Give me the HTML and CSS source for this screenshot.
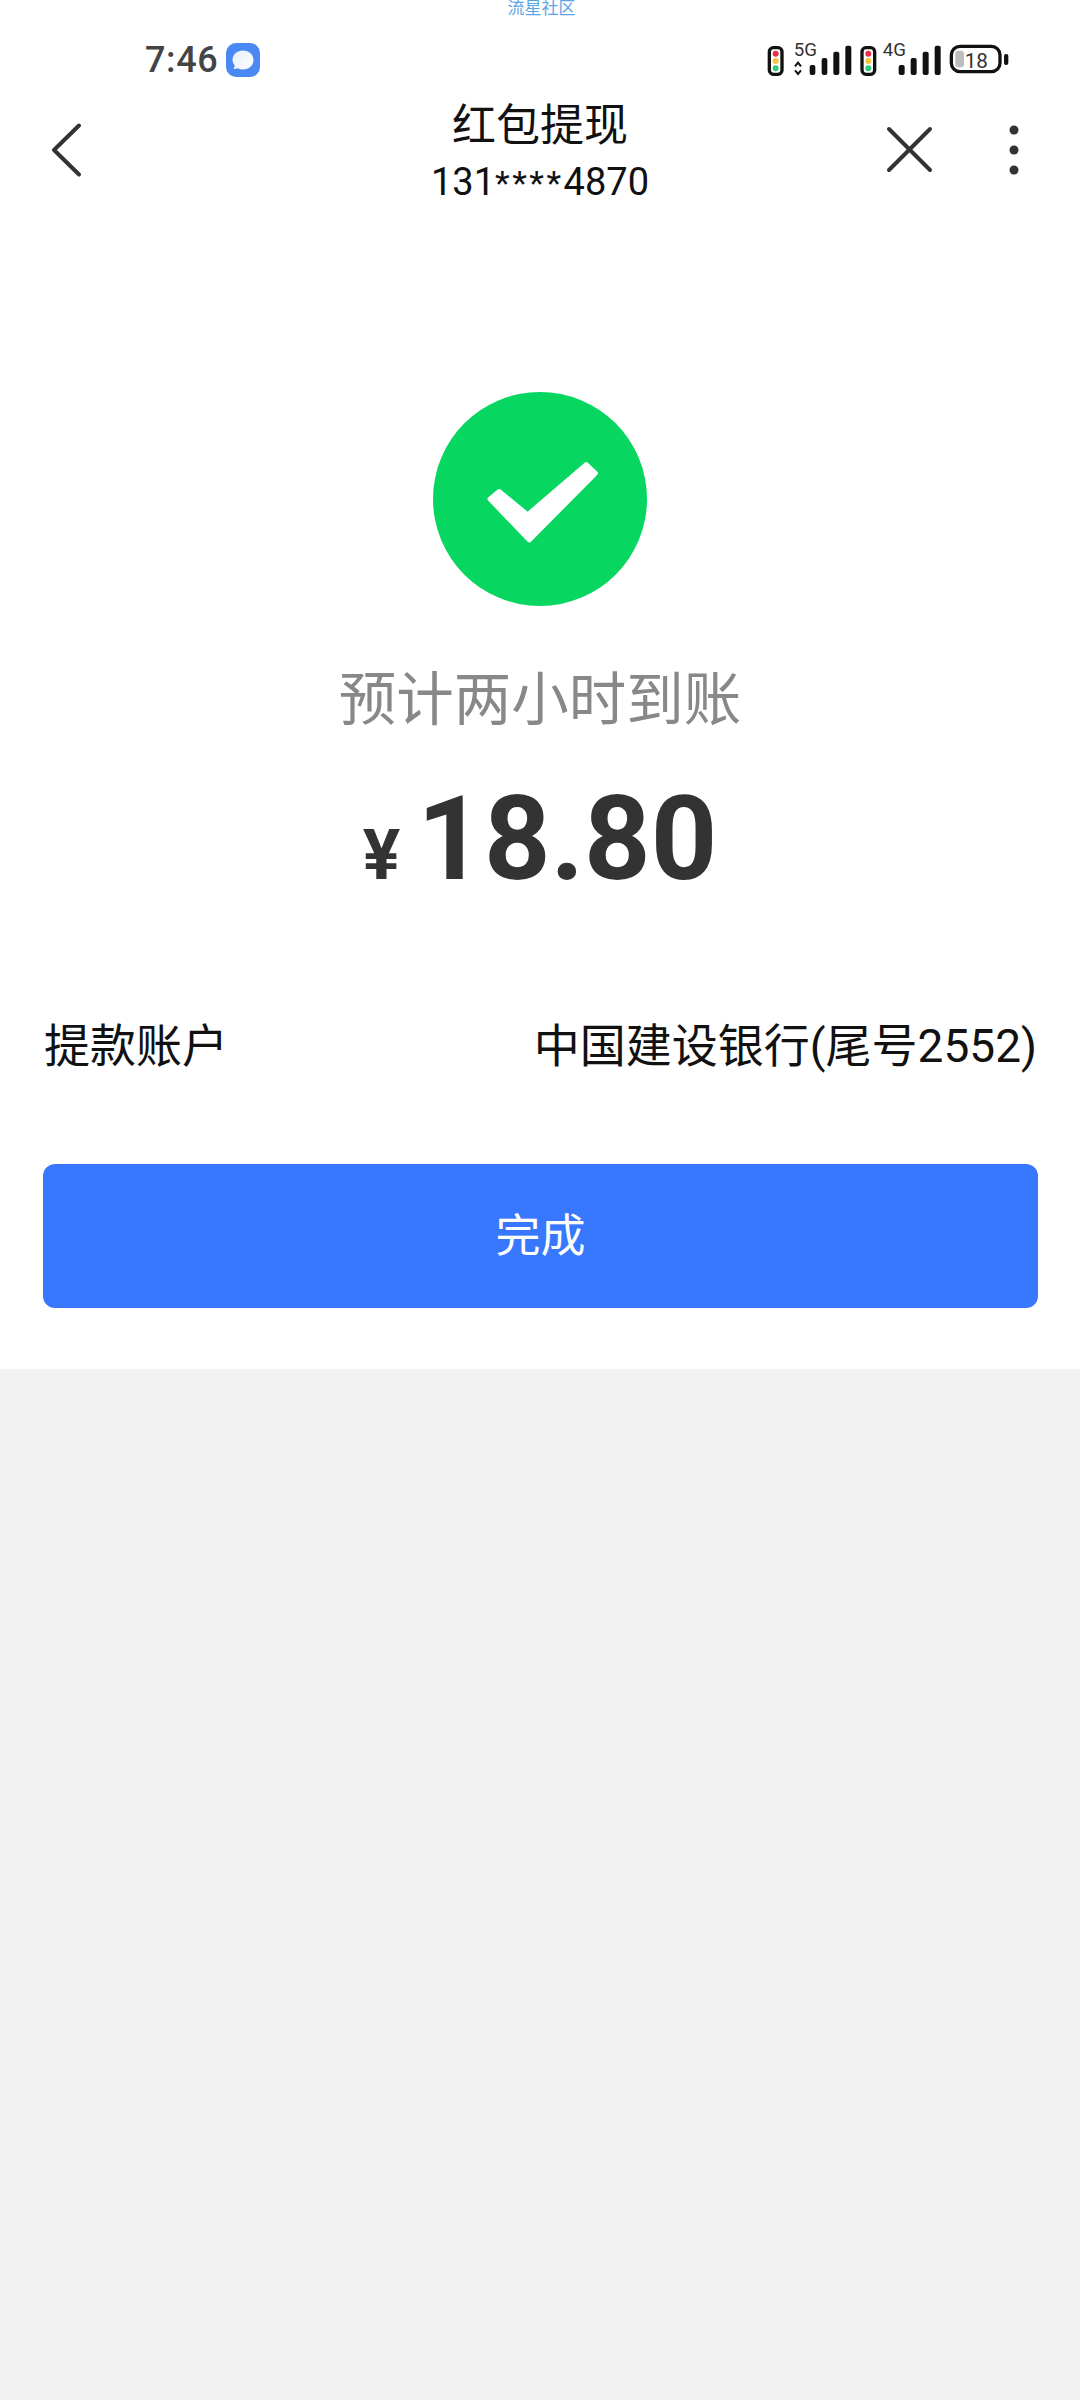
FILE: index.html
```html
<!DOCTYPE html>
<html lang="zh-CN">
<head>
<meta charset="utf-8">
<title>红包提现</title>
<link rel="stylesheet" href="styles.css">
</head>
<body>
<main class="sheet">
  <div class="watermark">流星社区</div>
  <div class="statusbar">
    <div class="status-left">
      <span class="clock">7:46</span>
      <svg class="msg-icon" viewBox="0 0 34 34" aria-hidden="true">
        <defs>
          <linearGradient id="bub" x1="0" y1="0" x2="1" y2="1">
            <stop offset="0" stop-color="#e4eefc"/><stop offset="1" stop-color="#ffffff"/>
          </linearGradient>
        </defs>
        <rect width="34" height="34" rx="10" fill="#4a89f3"/>
        <path d="M17 7.500c6 0 10.500 4 10.500 9.500s-4.500 9.500-10.500 9.500c-2 0-3.800-.4-5.300-1.200l-4.200 1 1.300-3.700C7.500 21 6.500 19 6.500 17c0-5.500 4.500-9.500 10.500-9.500z" fill="url(#bub)"/>
      </svg>
    </div>
    <svg class="status-right" viewBox="0 0 900 180" aria-hidden="true">
      <g class="sig">
        <rect x="88" y="83" width="38" height="80" rx="12" fill="#fff" stroke="#111" stroke-width="10"/>
        <circle cx="107" cy="101" r="9" fill="#e8304a"/><circle cx="107" cy="123" r="9" fill="#f7c23c"/><circle cx="107" cy="145" r="9" fill="#35c77c"/>
        <text x="161" y="107" class="net">5G</text>
        <path d="M165 139l9-11 9 11M165 151l9 11 9-11" fill="none" stroke="#111" stroke-width="6"/>
        <rect x="209" y="135" width="17" height="30" rx="6"/><rect x="245" y="114" width="17" height="51" rx="6"/><rect x="280" y="95" width="18" height="70" rx="6"/><rect x="316" y="77" width="18" height="88" rx="6"/>
        <rect x="366" y="83" width="38" height="80" rx="12" fill="#fff" stroke="#111" stroke-width="10"/>
        <circle cx="385" cy="101" r="9" fill="#e8304a"/><circle cx="385" cy="123" r="9" fill="#f7c23c"/><circle cx="385" cy="145" r="9" fill="#35c77c"/>
        <text x="428" y="107" class="net">4G</text>
        <rect x="476" y="135" width="18" height="30" rx="6"/><rect x="512" y="114" width="18" height="51" rx="6"/><rect x="548" y="95" width="18" height="70" rx="6"/><rect x="584" y="77" width="18" height="88" rx="6"/>
        <rect x="634" y="79" width="146" height="76" rx="26" fill="#fff" stroke="#111" stroke-width="10"/>
        <rect x="646" y="92" width="26" height="50" rx="9" fill="#bdbdbd"/>
        <text x="674" y="143" class="batt">18</text>
        <rect x="792" y="102" width="13" height="33" rx="6"/>
      </g>
    </svg>
  </div>
  <header class="navbar">
    <button class="icon-btn back" aria-label="返回">
      <svg viewBox="0 0 40 60" class="nav-svg back-svg"><path d="M32 5.500 7 30l25 24.500"/></svg>
    </button>
    <div class="titles">
      <div class="title">红包提现</div>
      <div class="subtitle">131<span class="mask">****</span>4870</div>
    </div>
    <div class="nav-actions">
      <svg viewBox="0 0 50 50" class="nav-svg close-svg"><path d="M4 4l41 41M45 4 4 45"/></svg>
      <svg viewBox="0 0 10 50" class="dots-svg"><circle cx="5" cy="5" r="4.500"/><circle cx="5" cy="25" r="4.500"/><circle cx="5" cy="45" r="4.500"/></svg>
    </div>
  </header>
  <section class="result">
    <svg class="check" viewBox="42 35 640 640" aria-hidden="true">
      <circle cx="362" cy="355" r="320" fill="#07d660"/>
      <path d="M212 355 240 332 325 402 500 252 528 278 330 478z" fill="#fff" stroke="#fff" stroke-width="14" stroke-linejoin="round"/>
    </svg>
    <div class="status-text">预计两小时到账</div>
    <div class="amount"><span class="yen">¥</span><span class="value">18.80</span></div>
  </section>
  <div class="info-row">
    <span>提款账户</span>
    <span>中国建设银行(尾号2552)</span>
  </div>
  <button class="done">完成</button>
</main>
</body>
</html>
```
FILE: styles.css
```css
* { box-sizing: border-box; }
html, body { margin: 0; padding: 0; }
body {
  width: 1080px;
  height: 2400px;
  background: #f2f2f2;
  font-family: Roboto, "Noto Sans CJK SC", sans-serif;
  overflow: hidden;
}
.sheet {
  background: #fff;
  height: 1369px;
  display: flex;
  flex-direction: column;
}
.watermark {
  height: 20px;
  padding-left: 3px;
  text-align: center;
  font-size: 17px;
  line-height: 16px;
  color: #58a6e8;
}
.statusbar {
  height: 60px;
  display: flex;
  justify-content: space-between;
  align-items: flex-start;
  padding: 0 40px 0 145px;
}
.status-left {
  display: flex;
  align-items: center;
  gap: 8px;
  height: 80px;
}
.clock {
  font-size: 36px;
  font-weight: 500;
  color: #444;
  letter-spacing: 0.6px;
  line-height: 40px;
}
.msg-icon { width: 34px; height: 34px; }
.status-right { width: 300px; height: 60px; display: block; }
.sig { fill: #111; }
.net { font: 400 56px Roboto, sans-serif; fill: #333; stroke: none; }
.batt { font: 400 62px Roboto, sans-serif; fill: #333; stroke: none; }
.navbar {
  display: grid;
  grid-template-columns: 1fr auto 1fr;
  align-items: start;
  height: 120px;
}
.icon-btn {
  border: 0;
  background: none;
  padding: 0;
  margin: 0;
  text-align: left;
}
.nav-svg { fill: none; stroke: #333; stroke-width: 4; stroke-linecap: round; stroke-linejoin: round; display: block; }
.back-svg { width: 40px; height: 60px; margin: 40px 0 0 47px; }
.titles { text-align: center; color: #111; }
.title { font-size: 44px; line-height: 60px; margin-top: 16px; }
.subtitle { font-size: 38px; line-height: 52px; }
.mask { font-size: 34px; letter-spacing: 2.5px; }
.nav-actions {
  display: flex;
  justify-content: flex-end;
  align-items: flex-start;
  gap: 74px;
  padding: 45px 61px 0 0;
}
.close-svg { width: 50px; height: 50px; }
.dots-svg { width: 10px; height: 50px; fill: #333; display: block; }
.result {
  display: flex;
  flex-direction: column;
  align-items: center;
}
.check { width: 214px; height: 214px; margin-top: 192px; display: block; }
.status-text {
  margin-top: 55px;
  font-size: 57.5px;
  line-height: 80px;
  color: #888;
}
.amount {
  margin-top: 30px;
  display: flex;
  align-items: baseline;
  gap: 17px;
  color: #333;
  font-weight: 700;
  line-height: 136px;
}
.yen { font-size: 70px; }
.value { font-size: 116px; letter-spacing: 0; }
.info-row {
  display: flex;
  justify-content: space-between;
  align-items: center;
  margin-top: 84px;
  padding: 0 43px 0 44px;
  height: 70px;
  font-size: 46px;
  color: #111;
}
.done {
  margin: 87px 42px 0 43px;
  height: 144px;
  padding: 0 0 8px;
  border: 0;
  border-radius: 12px;
  background: #3778ff;
  color: #fff;
  font: 400 45px Roboto, "Noto Sans CJK SC", sans-serif;
}
```
